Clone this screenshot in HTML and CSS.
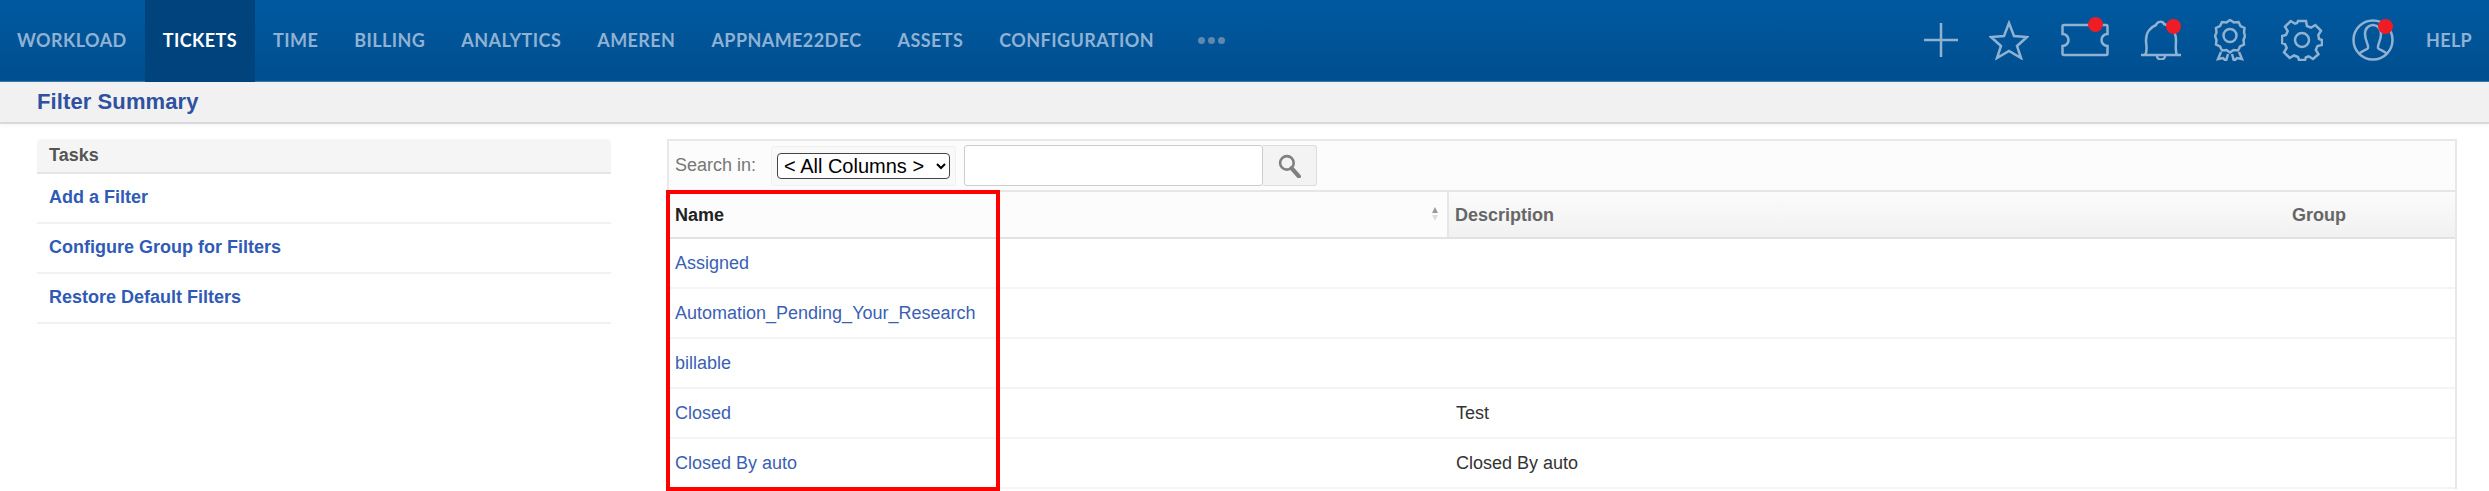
FILE: index.html
```html
<!DOCTYPE html>
<html lang="en">
<head>
<meta charset="utf-8">
<title>Filter Summary</title>
<link rel="stylesheet" href="styles.css">
</head>
<body>
<header class="topbar">
  <nav class="menu">
    <a class="menu-item">WORKLOAD</a>
    <a class="menu-item active">TICKETS</a>
    <a class="menu-item">TIME</a>
    <a class="menu-item">BILLING</a>
    <a class="menu-item">ANALYTICS</a>
    <a class="menu-item">AMEREN</a>
    <a class="menu-item">APPNAME22DEC</a>
    <a class="menu-item">ASSETS</a>
    <a class="menu-item">CONFIGURATION</a>
    <span class="more"><i></i><i></i><i></i></span>
  </nav>
  <div class="tools">
    <svg class="ic ic-plus" viewBox="0 0 34 34"><path d="M17 0V34M0 17H34"/></svg>
    <svg class="ic ic-star" viewBox="0 0 40 40"><path d="M20 3l5 13 13 1-10 9 4 12-12-7-12 7 4-12L2 17l13-1z"/></svg>
    <span class="ic-wrap ic-wrap-ticket">
      <svg class="ic ic-ticket" viewBox="0 0 48 34"><path d="M3 2H45a1.500 1.500 0 0 1 1.500 1.500V11a6 6 0 0 0 0 12v7.500A1.500 1.500 0 0 1 45 32H3a1.500 1.500 0 0 1-1.500-1.500V23a6 6 0 0 0 0-12V3.500A1.500 1.500 0 0 1 3 2z"/></svg>
      <i class="dot"></i>
    </span>
    <span class="ic-wrap ic-wrap-bell">
      <svg class="ic ic-bell" viewBox="0 0 42 40"><path d="M1 35H41M5 35C8 31 6 26 6 20 6 12 11 7 16 5 17 1 23 1 24 4 31 6 36 12 36 20 36 26 35 31 37 35M17 36a4 3.500 0 0 0 8 0"/></svg>
      <i class="dot"></i>
    </span>
    <svg class="ic ic-award" viewBox="0 0 32 42"><path d="M16 1l4 2.500 4.500-.5 2 4 4 2-.5 4.500L31 17l-1.500 4 .5 4.500-4 2-2 4-4.500-.5-3.500 2.500-3.500-2.500-4.500.5-2-4-4-2 .5-4.500L1 17l1.500-3.500L2 9l4-2 2-4 4.500.5z"/><circle cx="16" cy="16.500" r="6.500"/><path d="M7 33l-3 7 5-1 3 3 2-7M25 33l3 7-5-1-3 3-2-7"/></svg>
    <svg class="ic ic-gear" viewBox="0 0 42 42"><circle cx="21" cy="21" r="7"/><path d="M17 2h8l1 5 4 1.700 4.300-2.700 5.700 5.700-2.700 4.300L38 20l3 1v5l-4.500 1-1.700 4 2.700 4.300L32 40l-4.300-2.700-2.700 1L24 41h-6l-1-3-4-1.500L8.700 39 3 33.300l2.700-4.300L4 25l-3-1v-7l4-1 1.700-4L4 7.700 9.700 2 14 4.700 16 4z"/></svg>
    <span class="ic-wrap ic-wrap-user">
      <svg class="ic ic-user" viewBox="0 0 42 42"><circle cx="21" cy="21" r="19.500"/><path d="M7 35c2-3 8-4 9-6 1-3-3-7-3-14 0-6 4-9 8-9s8 3 8 9c0 7-4 11-3 14 1 2 7 3 9 6"/></svg>
      <i class="dot"></i>
    </span>
    <a class="help">HELP</a>
  </div>
</header>

<div class="pagehead"><h1>Filter Summary</h1></div>

<main class="content">
  <aside class="tasks">
    <h2 class="tasks-head">Tasks</h2>
    <a class="task">Add a Filter</a>
    <a class="task">Configure Group for Filters</a>
    <a class="task">Restore Default Filters</a>
  </aside>

  <section class="grid">
    <div class="toolbar">
      <span class="search-label">Search in:</span>
      <span class="select-wrap">
        <select class="column-select"><option>&lt; All Columns &gt;</option></select>
      </span>
      <input class="search-input" type="text">
      <button class="search-btn" type="button" aria-label="Search">
        <svg viewBox="0 0 24 24" class="search-ic"><circle cx="9.500" cy="9.500" r="6.500"/><path class="handle" d="M14 14.500l7 8"/></svg>
      </button>
    </div>
    <div class="row head">
      <div class="cell name">Name<span class="sort"><i class="up"></i><i class="down"></i></span></div>
      <div class="cell desc">Description</div>
      <div class="cell group">Group</div>
    </div>
    <div class="row"><div class="cell name"><a>Assigned</a></div><div class="cell desc"></div><div class="cell group"></div></div>
    <div class="row"><div class="cell name"><a>Automation_Pending_Your_Research</a></div><div class="cell desc"></div><div class="cell group"></div></div>
    <div class="row"><div class="cell name"><a>billable</a></div><div class="cell desc"></div><div class="cell group"></div></div>
    <div class="row"><div class="cell name"><a>Closed</a></div><div class="cell desc">Test</div><div class="cell group"></div></div>
    <div class="row"><div class="cell name"><a>Closed By auto</a></div><div class="cell desc">Closed By auto</div><div class="cell group"></div></div>
    <div class="highlight"></div>
  </section>
</main>
</body>
</html>
```
FILE: styles.css
```css
* { box-sizing: border-box; }
html, body { margin: 0; padding: 0; height: 491px; overflow: hidden; background: #fff; }
body { font-family: "Liberation Sans", Arial, sans-serif; font-size: 18px; color: #333; }

.topbar {
  height: 82px;
  display: flex;
  justify-content: space-between;
  background: linear-gradient(#00599f, #004e8f);
  box-shadow: inset 0 -2px 1px -1px rgba(255,255,255,.25);
}
.menu { display: flex; align-items: stretch; }
.menu-item {
  display: flex;
  align-items: center;
  padding: 0 18px 2px;
  font-family: Lato, sans-serif;
  font-weight: 700;
  font-size: 18px;
  letter-spacing: .42px;
  color: #8fb2d4;
}
.menu-item:first-child { padding-left: 17px; }
.menu-item.active { background: #00437d; color: #fff; }
.more { display: flex; align-items: center; gap: 3px; margin-left: 26px; padding-bottom: 2px; }
.more i { width: 7px; height: 7px; border-radius: 50%; background: #6088ae; }

.tools { display: flex; align-items: center; height: 80px; }
.ic { display: block; fill: none; stroke: #8fb2d3; stroke-width: 2.500; }
.ic-wrap { position: relative; display: block; }
.dot { position: absolute; width: 15px; height: 15px; border-radius: 50%; background: #ee1c25; }
.ic-plus { width: 34px; height: 34px; margin-right: 31px; }
.ic-star { width: 40px; height: 40px; margin-right: 32px; }
.ic-wrap-ticket { margin-right: 31px; }
.ic-ticket { width: 48px; height: 34px; }
.ic-wrap-ticket .dot { top: -6px; left: 27px; }
.ic-wrap-bell { margin-right: 32px; }
.ic-bell { width: 42px; height: 40px; }
.ic-wrap-bell .dot { top: -1px; left: 26px; }
.ic-award { width: 32px; height: 42px; margin-right: 35px; }
.ic-gear { width: 42px; height: 42px; margin-right: 29px; }
.ic-wrap-user { margin-right: 32px; }
.ic-user { width: 42px; height: 42px; }
.ic-wrap-user .dot { top: 0; left: 26px; }
.help { font-family: Lato, sans-serif; font-weight: 700; font-size: 18px; letter-spacing: .3px; color: #8fb2d4; margin-right: 17px; }

.pagehead {
  height: 42px;
  background: #f1f1f1;
  border-bottom: 2px solid #d9d9d9;
  padding-left: 37px;
  box-shadow: 0 2px 4px rgba(0,0,0,.04);
}
.pagehead h1 { margin: 0; font-size: 22px; line-height: 40px; font-weight: 700; color: #2f52a0; letter-spacing: .1px; }

.content { display: flex; padding: 15px 32px 0 37px; gap: 56px; }

.tasks { width: 574px; flex: none; }
.tasks-head {
  margin: 0;
  height: 35px;
  padding-left: 12px;
  background: #f5f5f5;
  border-bottom: 2px solid #e6e6e6;
  border-radius: 5px 5px 0 0;
  font-size: 18px;
  line-height: 32px;
  font-weight: 700;
  color: #555;
}
.task {
  display: block;
  height: 50px;
  padding-left: 12px;
  border-bottom: 2px solid #f2f2f2;
  font-size: 18px;
  line-height: 46px;
  font-weight: 700;
  color: #2f5bb7;
}

.grid { position: relative; flex: 1; border: solid #e8e8e8; border-width: 2px 2px 0 2px; }
.toolbar {
  height: 51px;
  display: flex;
  align-items: center;
  padding-left: 6px;
  background: #fcfcfc;
  border-bottom: 2px solid #e6e6e6;
}
.search-label { width: 96px; color: #777; font-size: 18px; }
.select-wrap {
  width: 185px;
  height: 40px;
  padding-top: 6px;
  padding-left: 5px;
  background: #f9f9f9;
  border: 1px solid #f0f0f0;
  border-radius: 3px;
}
.column-select {
  display: block;
  width: 173px;
  height: 26px;
  padding: 0 0 0 2px;
  background: #fff;
  border: 1px solid #444;
  border-radius: 4px;
  font-family: "Liberation Sans", Arial, sans-serif;
  font-size: 20px;
  line-height: 22px;
  color: #000;
}
.search-input {
  margin-left: 8px;
  width: 299px;
  height: 41px;
  background: #fff;
  border: 1px solid #ccc;
  border-radius: 3px;
}
.search-btn {
  width: 54px;
  height: 41px;
  padding: 0;
  background: #f3f3f3;
  border: 1px solid #ddd;
  border-left: 0;
  border-radius: 0 3px 3px 0;
  display: flex;
  align-items: center;
  justify-content: center;
}
.search-ic { width: 25px; height: 25px; fill: none; stroke: #808080; stroke-width: 2.500; }
.search-ic .handle { stroke-width: 4; stroke-linecap: round; }

.row { display: grid; grid-template-columns: 780px 836px 1fr; height: 50px; border-bottom: 2px solid #f4f4f4; }
.row.head { height: 47px; border-bottom: 2px solid #e2e2e2; font-weight: 700; }
.row.head .cell { padding-top: 1px; }
.cell { padding-left: 6px; display: flex; align-items: center; position: relative; }
.row a { color: #3a5fb5; }
.row.head .name { background: #fcfcfc; color: #222; border-right: 2px solid #e6e6e6; }
.row.head .desc, .row.head .group { background: linear-gradient(#fbfbfb, #f1f1f1); color: #666; }
.row.head .desc { padding-left: 6px; }
.row.head .group { padding-left: 7px; }
.desc { padding-left: 7px; }
.sort { position: absolute; right: 9px; top: 15px; display: flex; flex-direction: column; gap: 2px; }
.sort i { display: block; width: 0; height: 0; border-left: 3.500px solid transparent; border-right: 3.500px solid transparent; }
.sort .up { border-bottom: 6px solid #999; }
.sort .down { border-top: 6px solid #ddd; }

.highlight { position: absolute; left: -3px; top: 49px; width: 334px; height: 301px; border: 4px solid #ff0000; }
```
